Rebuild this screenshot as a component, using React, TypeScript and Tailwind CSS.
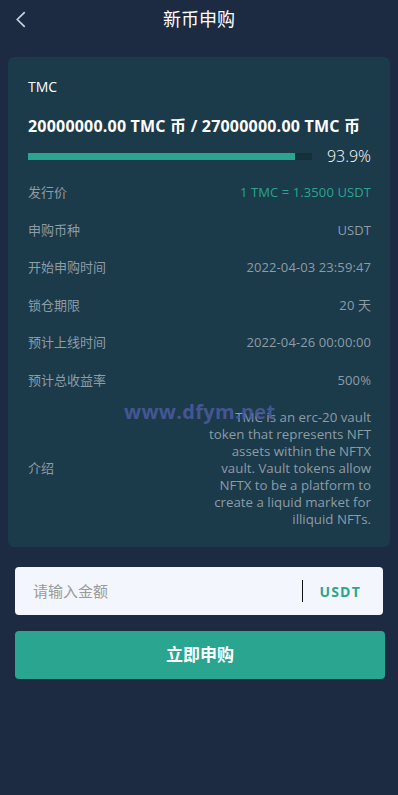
import React from 'react'

const font = { fontFamily: '"Open Sans", "Noto Sans CJK SC", sans-serif' }

const rows: { label: string; value: string; accent?: boolean }[] = [
  { label: '发行价', value: '1 TMC = 1.3500 USDT', accent: true },
  { label: '申购币种', value: 'USDT' },
  { label: '开始申购时间', value: '2022-04-03 23:59:47' },
  { label: '锁仓期限', value: '20 天' },
  { label: '预计上线时间', value: '2022-04-26 00:00:00' },
  { label: '预计总收益率', value: '500%' },
]

const intro = [
  'TMC is an erc-20 vault',
  'token that represents NFT',
  'assets within the NFTX',
  'vault. Vault tokens allow',
  'NFTX to be a platform to',
  'create a liquid market for',
  'illiquid NFTs.',
]

export default function App() {
  return (
    <div className="w-[398px] min-h-[795px] bg-[#1c2a42]" style={font}>
      {/* Header */}
      <header className="relative h-[38px] flex items-center justify-center">
        <button className="absolute left-[15px] top-[11px] text-[#c9d1dc]">
          <svg viewBox="0 0 10 16" width="11" height="17" fill="none" stroke="currentColor" strokeWidth={1.6}>
            <polyline points="9 1 2 8 9 15" />
          </svg>
        </button>
        <h1 className="text-[18px] text-white">新币申购</h1>
      </header>

      {/* Card */}
      <div className="mx-[8px] mt-[19px] rounded-[6px] bg-[#1b3a4a] pl-[20px] pr-[19px] pt-[20px] pb-[19px]">
        <div className="text-[14px] leading-[20px] text-white">TMC</div>
        <div className="mt-[18px] text-[16px] leading-[22px] font-bold text-white tracking-[0.2px]">
          20000000.00 TMC 币 / 27000000.00 TMC 币
        </div>
        <div className="mt-[8px] h-[22px] flex items-center">
          <div className="w-[284px] h-[7px] bg-[#14303a]">
            <div className="h-full bg-[#2aa58f]" style={{ width: '93.9%' }} />
          </div>
          <span className="ml-auto text-[16px] font-light text-white">93.9%</span>
        </div>

        <div className="mt-[7px]">
          {rows.map((r) => (
            <div key={r.label} className="h-[37.5px] flex items-center justify-between text-[13px]">
              <span className="text-[#8d9ca6]">{r.label}</span>
              <span className={`tracking-[0.1px] ${r.accent ? 'text-[#2aa58f]' : 'text-[#8d9ca6]'}`}>{r.value}</span>
            </div>
          ))}
        </div>

        <div className="relative mt-[10px] flex items-center justify-between text-[13px]">
          <span className="text-[#8d9ca6]">介绍</span>
          <div className="text-right text-[13.3px] leading-[17px] text-[#8d9ca6]">
            {intro.map((l) => (
              <div key={l}>{l}</div>
            ))}
          </div>
          <span className="absolute left-[96px] top-[-12px] text-[20px] font-bold tracking-[0.3px] text-[#4a5a9c]/90 pointer-events-none">
            www.dfym.net
          </span>
        </div>
      </div>

      {/* Input */}
      <div className="mx-[15px] mt-[20px] h-[48px] rounded-[4px] bg-[#f3f6fc] flex items-center pl-[18px] pr-[22px]">
        <input
          className="flex-1 bg-transparent outline-none text-[15px] placeholder:text-[#9a9a9a]"
          placeholder="请输入金额"
        />
        <div className="w-px h-[22px] bg-[#111]" />
        <span className="ml-[16px] text-[14px] font-bold tracking-[1.2px] text-[#2aa58f]">USDT</span>
      </div>

      {/* Button */}
      <button className="mx-[15px] mt-[16px] w-[370px] h-[48px] rounded-[4px] bg-[#2aa58f] text-white text-[17px] font-bold">
        立即申购
      </button>
    </div>
  )
}
